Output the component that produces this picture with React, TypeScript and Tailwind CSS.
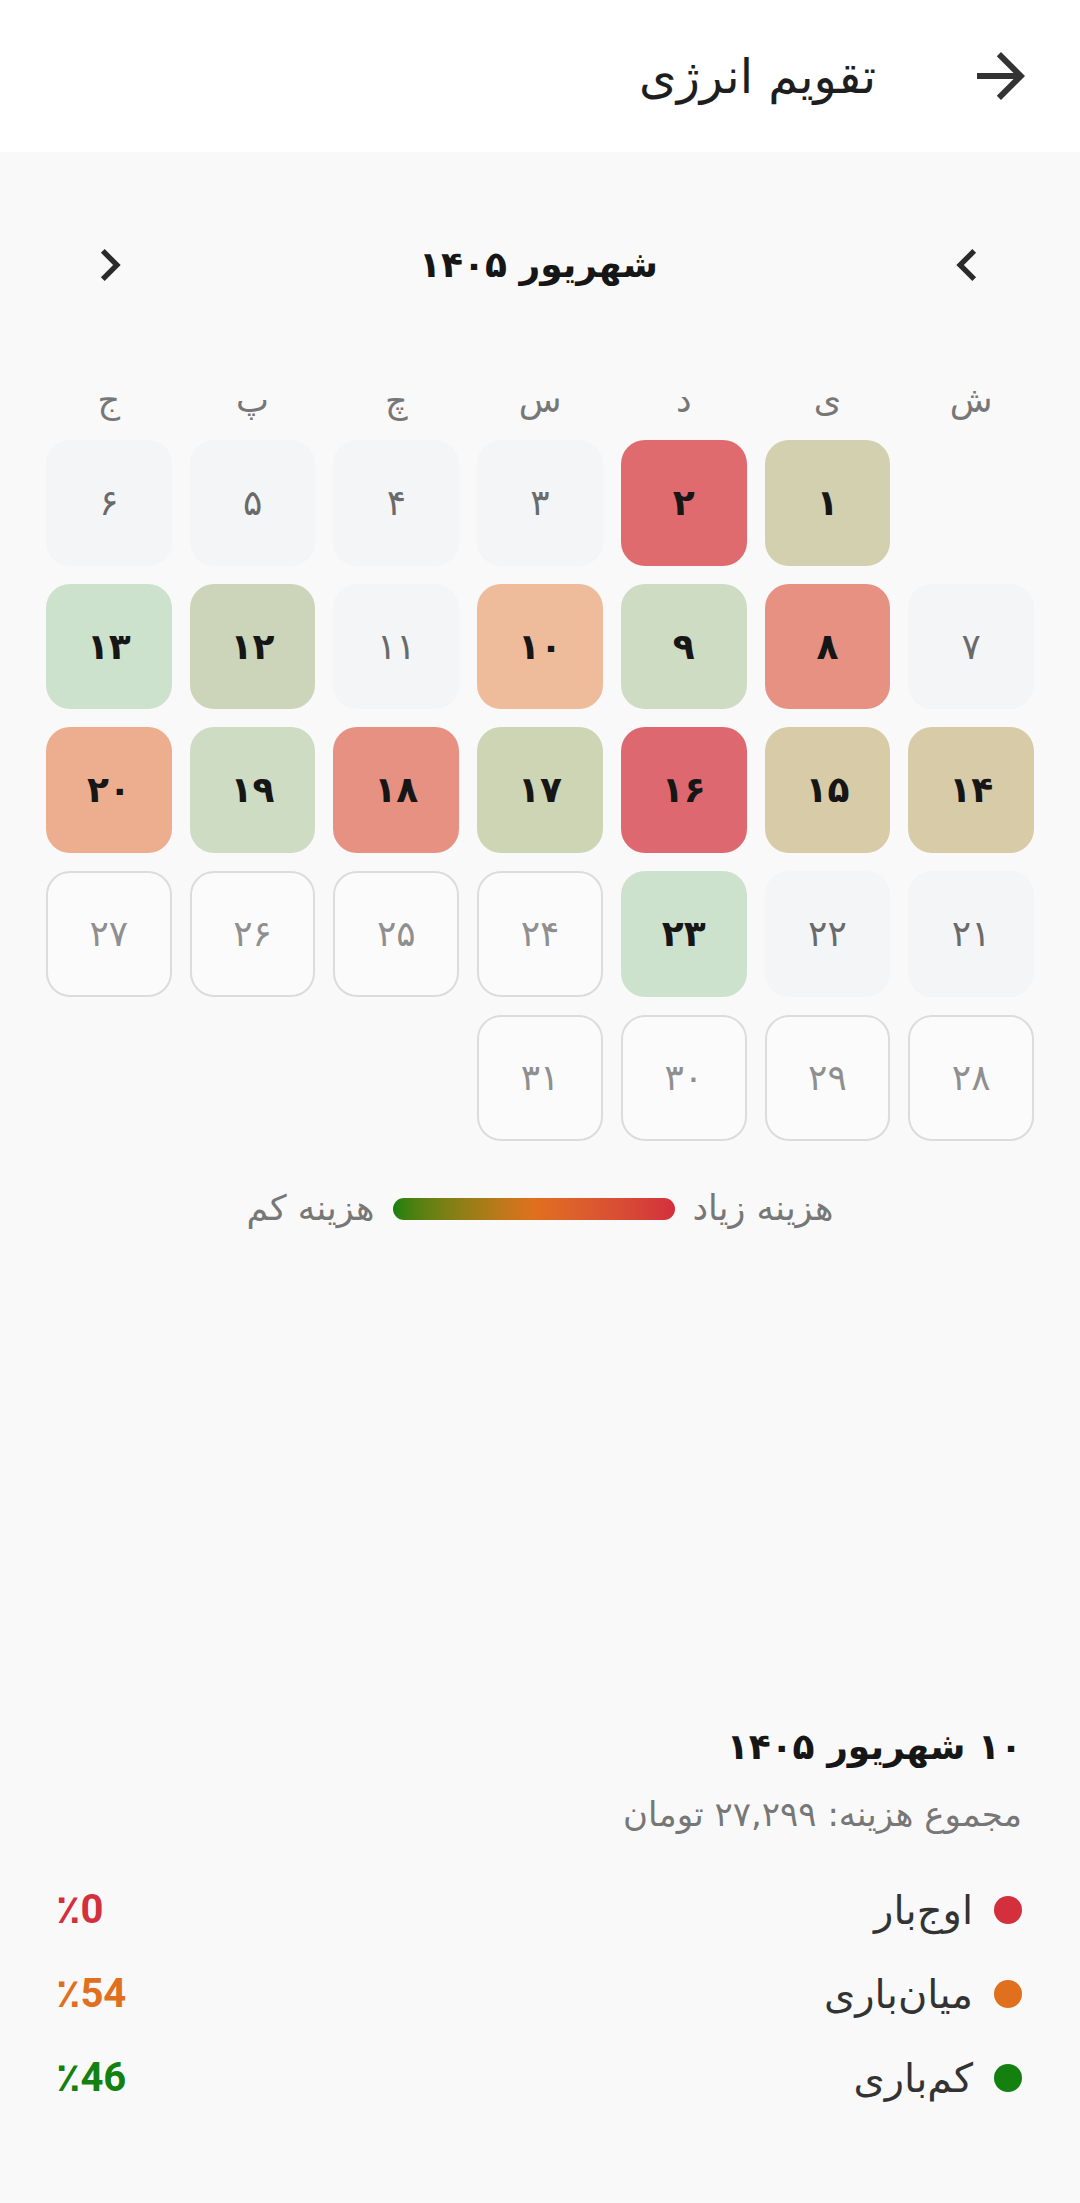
import React from "react";

type Cell = { n: string; kind: "hot" | "none" | "future"; bg?: string };

const weekdays = ["ش", "ی", "د", "س", "چ", "پ", "ج"];

const days: Cell[] = [
  { n: "۱", kind: "hot", bg: "bg-[#d2d0ae]" },
  { n: "۲", kind: "hot", bg: "bg-[#e06b6f]" },
  { n: "۳", kind: "none" },
  { n: "۴", kind: "none" },
  { n: "۵", kind: "none" },
  { n: "۶", kind: "none" },
  { n: "۷", kind: "none" },
  { n: "۸", kind: "hot", bg: "bg-[#e69182]" },
  { n: "۹", kind: "hot", bg: "bg-[#cddcc3]" },
  { n: "۱۰", kind: "hot", bg: "bg-[#eebc9b]" },
  { n: "۱۱", kind: "none" },
  { n: "۱۲", kind: "hot", bg: "bg-[#ccd5b9]" },
  { n: "۱۳", kind: "hot", bg: "bg-[#cde2cc]" },
  { n: "۱۴", kind: "hot", bg: "bg-[#d8cca8]" },
  { n: "۱۵", kind: "hot", bg: "bg-[#d8cba8]" },
  { n: "۱۶", kind: "hot", bg: "bg-[#de6870]" },
  { n: "۱۷", kind: "hot", bg: "bg-[#cdd5b4]" },
  { n: "۱۸", kind: "hot", bg: "bg-[#e69182]" },
  { n: "۱۹", kind: "hot", bg: "bg-[#cddcc3]" },
  { n: "۲۰", kind: "hot", bg: "bg-[#edae8f]" },
  { n: "۲۱", kind: "none" },
  { n: "۲۲", kind: "none" },
  { n: "۲۳", kind: "hot", bg: "bg-[#cde2cc]" },
  { n: "۲۴", kind: "future" },
  { n: "۲۵", kind: "future" },
  { n: "۲۶", kind: "future" },
  { n: "۲۷", kind: "future" },
  { n: "۲۸", kind: "future" },
  { n: "۲۹", kind: "future" },
  { n: "۳۰", kind: "future" },
  { n: "۳۱", kind: "future" },
];

const shares = [
  { label: "اوج‌بار", value: "٪0", dot: "bg-[#d32f3c]", text: "text-[#d32f3c]" },
  { label: "میان‌باری", value: "٪54", dot: "bg-[#e0701e]", text: "text-[#e0701e]" },
  { label: "کم‌باری", value: "٪46", dot: "bg-[#13800f]", text: "text-[#13800f]" },
];

const DayCell: React.FC<{ cell: Cell }> = ({ cell }) => {
  if (cell.kind === "hot") {
    return (
      <div className={`aspect-square rounded-[24px] flex items-center justify-center text-[36px] font-bold text-[#161616] ${cell.bg}`}>
        {cell.n}
      </div>
    );
  }
  if (cell.kind === "future") {
    return (
      <div className="aspect-square rounded-[24px] border-2 border-[#dcdcdc] bg-[#fbfbfb] flex items-center justify-center text-[36px] text-[#8f8f8f]">
        {cell.n}
      </div>
    );
  }
  return (
    <div className="aspect-square rounded-[24px] bg-[#f4f5f7] flex items-center justify-center text-[36px] text-[#6a6a6a]">
      {cell.n}
    </div>
  );
};

export default function App() {
  return (
    <div
      dir="rtl"
      className="w-[1080px] h-[2203px] flex flex-col bg-[#f9f9f9] font-['DejaVu_Sans',sans-serif] overflow-hidden"
    >
      {/* Top bar */}
      <div className="h-[152px] shrink-0 bg-white flex items-center pr-[43px]">
        <svg viewBox="0 0 24 24" className="w-[72px] h-[72px] fill-[#333]">
          <path d="M12 4l-1.41 1.41L16.17 11H4v2h12.17l-5.58 5.59L12 20l8-8z" />
        </svg>
        <h1 className="mr-[89px] text-[48px] text-[#1e1e1e] leading-none">تقویم انرژی</h1>
      </div>

      {/* Month switcher */}
      <div className="mt-[81px] flex items-center justify-between pr-[81px] pl-[78px]">
        <svg viewBox="0 0 24 24" className="w-[64px] h-[64px] fill-[#2a2a2a]">
          <path d="M15.41 7.41L14 6l-6 6 6 6 1.41-1.41L10.83 12z" />
        </svg>
        <div className="text-[36px] font-bold text-[#161616]">شهریور ۱۴۰۵</div>
        <svg viewBox="0 0 24 24" className="w-[64px] h-[64px] fill-[#2a2a2a]">
          <path d="M10 6L8.59 7.41 13.17 12l-4.58 4.59L10 18l6-6z" />
        </svg>
      </div>

      {/* Calendar */}
      <div className="px-[46px] mt-[73px]">
        <div className="grid grid-cols-7 gap-x-[18px] h-[60px] mb-[10px]">
          {weekdays.map((w) => (
            <div key={w} className="flex items-center justify-center text-[35px] text-[#777]">
              {w}
            </div>
          ))}
        </div>
        <div className="grid grid-cols-7 gap-[18px]">
          <div />
          {days.map((d) => (
            <DayCell key={d.n} cell={d} />
          ))}
        </div>
      </div>

      {/* Legend */}
      <div className="mt-[43px] h-[50px] flex items-center justify-center gap-[18px] text-[35px] text-[#777]">
        <span>هزینه زیاد</span>
        <div className="w-[282px] h-[22px] rounded-full bg-gradient-to-r from-[#13800f] via-[#e0701e] to-[#d32f3c]" />
        <span>هزینه کم</span>
      </div>

      {/* Selected day details */}
      <div className="mt-auto pr-[58px] pl-[56px] pb-[95px]">
        <div className="text-[36px] font-bold text-[#161616] leading-[66px]">۱۰ شهریور ۱۴۰۵</div>
        <div className="text-[34px] text-[#777] leading-[60px] mt-[4px]">مجموع هزینه: ۲۷,۲۹۹ تومان</div>
        <div className="mt-[36px] flex flex-col gap-[24px]">
          {shares.map((s) => (
            <div key={s.label} className="h-[60px] flex items-center justify-between">
              <div className="flex items-center gap-[21px]">
                <span className={`w-[28px] h-[28px] rounded-full ${s.dot}`} />
                <span className="text-[40px] text-[#333]">{s.label}</span>
              </div>
              <span className={`font-['Roboto','DejaVu_Sans',sans-serif] text-[40px] font-bold ${s.text}`}>{s.value}</span>
            </div>
          ))}
        </div>
      </div>
    </div>
  );
}
